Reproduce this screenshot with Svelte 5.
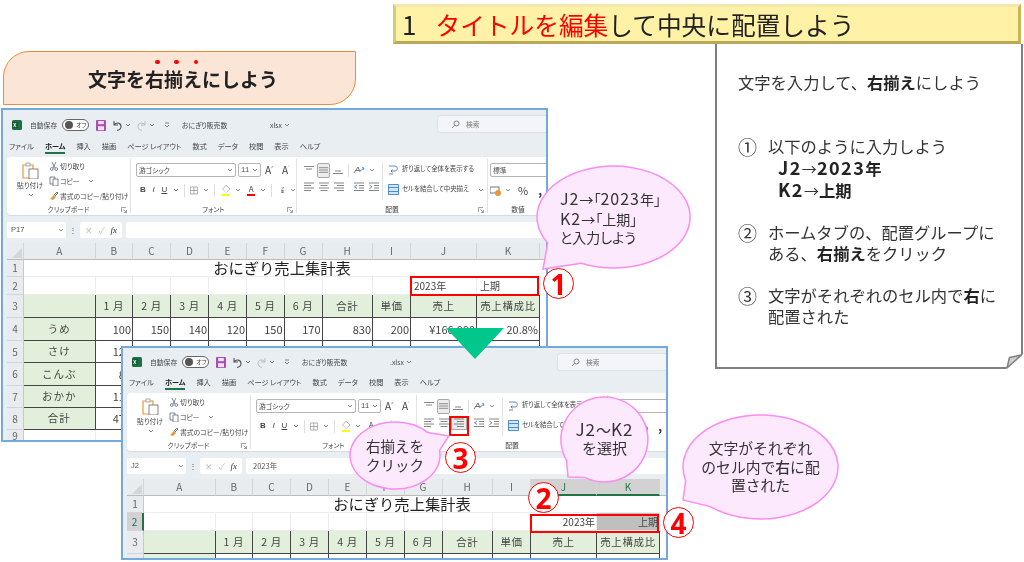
<script>
	const columns = ['A', 'B', 'C', 'D', 'E', 'F', 'G', 'H', 'I', 'J', 'K'];
	const headers = ['', '1 月', '2 月', '3 月', '4 月', '5 月', '6 月', '合計', '単価', '売上', '売上構成比'];
	// 5行目以降は2枚目のウィンドウに隠れるのでB列まで
	const body = [
		['うめ', '100', '150', '140', '120', '150', '170', '830', '200', '¥166,000', '20.8%'],
		['さけ', '120', '', '', '', '', '', '', '', '', ''],
		['こんぶ', '80', '', '', '', '', '', '', '', '', ''],
		['おかか', '110', '', '', '', '', '', '', '', '', ''],
		['合計', '470', '', '', '', '', '', '', '', '', '']
	];
	const blankRow = ['', '', '', '', '', '', '', '', '', '', ''];
	const tabs = ['ファイル', 'ホーム', '挿入', '描画', 'ページ レイアウト', '数式', 'データ', '校閲', '表示', 'ヘルプ'];

	// 吹き出しの輪郭: 楕円 + 先端 (tx, ty) へのしっぽ
	function bubble(w, h, tx, ty) {
		const rx = w / 2;
		const ry = h / 2;
		const a = Math.atan2((ty - ry) / ry, (tx - rx) / rx);
		const d = 0.3;
		const p = (t) => `${(rx + rx * Math.cos(t)).toFixed(1)} ${(ry + ry * Math.sin(t)).toFixed(1)}`;
		return `M${p(a + d)} A${rx} ${ry} 0 1 1 ${p(a - d)} L${tx} ${ty} Z`;
	}
</script>

{#snippet lines(rows)}
	<svg class="ico" width="12" height="12" viewBox="0 0 12 12" fill="none" stroke="#777" stroke-width="0.9">
		{#each rows as r}
			<path d={r} />
		{/each}
	</svg>
{/snippet}

{#snippet chev()}
	<svg class="chev" width="6" height="4" viewBox="0 0 6 4" fill="none" stroke="#666" stroke-width="0.8"><path d="M1 1l2 2 2-2" /></svg>
{/snippet}

{#snippet launcher()}
	<svg class="launcher" width="6" height="6" viewBox="0 0 6 6" fill="none" stroke="#777" stroke-width="0.7"><path d="M.5 5V.5H5M2.5 2.5L5.5 5.5M5.5 3v2.5H3" /></svg>
{/snippet}

{#snippet excel(second)}
	<div class="titlebar">
		<svg class="logo" width="10" height="10" viewBox="0 0 10 10"><rect width="10" height="10" rx="1.5" fill="#1d7044" /><rect x="0" y="2" width="6" height="6" fill="#0f5c34" /><path d="M1.5 3l2.5 4M4 3L1.5 7" stroke="#fff" stroke-width="0.9" /></svg>
		<span class="autosave">自動保存</span>
		<span class="toggle"><i></i>オフ</span>
		<svg class="save" width="10" height="11" viewBox="0 0 10 11"><rect width="10" height="11" rx="1" fill="#a84fb0" /><rect x="2.2" y="1" width="5.6" height="3.2" fill="#f3e2f5" /><rect x="2" y="6.2" width="6" height="4" fill="#f3e2f5" /></svg>
		<svg class="undo" width="11" height="11" viewBox="0 0 11 11" fill="none" stroke="#555" stroke-width="1.1"><path d="M2 1v4h4M2 5c2-3 7-2.500 7 1.500 0 2-1.500 3.500-4 4" /></svg>
		{@render chev()}
		<svg class="redo" width="11" height="11" viewBox="0 0 11 11" fill="none" stroke="#bbb" stroke-width="1"><path d="M9 1v4H5M9 5C7 2 2 2.500 2 6.500c0 2 1.500 3.500 4 4" /></svg>
		{@render chev()}
		<svg class="qat" width="6" height="6" viewBox="0 0 6 6" fill="none" stroke="#666" stroke-width="0.8"><path d="M1 1h4M1 3l2 2 2-2" /></svg>
		<span class="filename">おにぎり販売数</span>
		<span class="ext">{second ? '.xlsx' : 'xlsx'}</span>
		{@render chev()}
		<div class="search">
			<svg width="9" height="9" viewBox="0 0 9 9" fill="none" stroke="#666" stroke-width="0.8"><circle cx="5.500" cy="3.500" r="2.500" /><path d="M3.700 5.300L1 8" /></svg>
			<span>検索</span>
		</div>
	</div>

	<div class="tabs">
		{#each tabs as tab, i}
			<span class:active={i === 1}>{tab}</span>
		{/each}
	</div>

	<div class="ribbon">
		<section class="group clipboard">
			<div class="group-body">
				<div class="paste">
					<svg width="17" height="17" viewBox="0 0 17 17" fill="none"><path d="M1 3h10v13H1z" stroke="#e69a3c" stroke-width="1.200" /><rect x="4" y="1" width="4" height="3" fill="#fff" stroke="#888" stroke-width="0.700" /><rect x="7" y="7" width="9" height="10" fill="#fff" stroke="#777" stroke-width="0.900" /></svg>
					<span>貼り付け</span>
					{@render chev()}
				</div>
				<div class="clip-list">
					<div><svg width="10" height="10" viewBox="0 0 10 10" fill="none" stroke="#5a6b7c" stroke-width="0.800"><path d="M3 1l3 6M7 1L4 7" /><circle cx="2.800" cy="8" r="1.400" /><circle cx="7.200" cy="8" r="1.400" /></svg>切り取り</div>
					<div><svg width="10" height="10" viewBox="0 0 10 10" fill="none" stroke="#5a6b7c" stroke-width="0.800"><path d="M1 1h5v7H1z" /><path d="M4 3h5v7H4z" fill="#fff" /></svg>コピー<span class="copy-chev">{@render chev()}</span></div>
					<div><svg width="10" height="10" viewBox="0 0 10 10" fill="none"><path d="M1 8l4-4 2 2-3 3z" fill="#e69a3c" /><path d="M5 4l3-3 1 1-3 3" stroke="#555" stroke-width="0.800" /></svg>書式のコピー/貼り付け</div>
				</div>
			</div>
			<div class="group-label">クリップボード{@render launcher()}</div>
		</section>

		<section class="group font">
			<div class="group-body stack">
				<div class="row">
					<span class="select family">游ゴシック{@render chev()}</span>
					<span class="select size">11{@render chev()}</span>
					<span class="grow-a">A<sup>^</sup></span>
					<span class="shrink-a">A<sup>˅</sup></span>
				</div>
				<div class="row fmt">
					<b class="fb">B</b>
					<i class="fi">I</i>
					<u class="fu">U</u>
					{@render chev()}
					<em class="sep"></em>
					<svg width="11" height="11" viewBox="0 0 11 11" fill="none" stroke="#777" stroke-width="0.800"><path d="M.5.500h10v10H.5zM5.500.500v10M.5 5.500h10" /></svg>
					{@render chev()}
					<em class="sep"></em>
					<span class="colored yellow">◇</span>
					{@render chev()}
					<span class="colored red">A</span>
					{@render chev()}
					<em class="sep"></em>
					<span class="phonetic">ア<br />亜</span>
					{@render chev()}
				</div>
			</div>
			<div class="group-label">フォント{@render launcher()}</div>
		</section>

		<section class="group align">
			<div class="group-body stack">
				<div class="row">
					{@render lines(['M1 2.500h10M3 5h6'])}
					<span class="pressed">{@render lines(['M1 3.500h10M1 6h10M1 8.500h10'])}</span>
					{@render lines(['M3 7h6M1 9.500h10'])}
					<em class="sep"></em>
					<svg class="ico" width="12" height="12" viewBox="0 0 12 12" fill="none" stroke="#666" stroke-width="0.900"><path d="M1 9l4-6 2 5M2.500 6.500h3.500" /><path d="M7 7l4-3M9 3.500l2 .5-.5 2" stroke="#4a8fd0" /></svg>
					{@render chev()}
				</div>
				<div class="row">
					{@render lines(['M1 2h10M1 4.500h7M1 7h10M1 9.500h7'])}
					{@render lines(['M1 2h10M2.500 4.500h7M1 7h10M2.500 9.500h7'])}
					<span class="right-btn" class:marked={second}>{@render lines(['M1 2h10M4 4.500h7M1 7h10M4 9.500h7'])}</span>
					<em class="sep"></em>
					<svg class="ico" width="12" height="12" viewBox="0 0 12 12" fill="none" stroke="#777" stroke-width="0.900"><path d="M1 2h10M6 4.500h5M6 7h5M1 9.500h10" /><path d="M4 4L1.500 5.800 4 7.500" stroke="#3f83c4" /></svg>
					<svg class="ico" width="12" height="12" viewBox="0 0 12 12" fill="none" stroke="#777" stroke-width="0.900"><path d="M1 2h10M6 4.500h5M6 7h5M1 9.500h10" /><path d="M1.500 4L4 5.800 1.500 7.500" stroke="#3f83c4" /></svg>
				</div>
			</div>
			<em class="vsep"></em>
			<div class="wrap-col">
				<div><svg class="ico" width="11" height="12" viewBox="0 0 11 12" fill="none" stroke="#4a7fb5" stroke-width="0.900"><path d="M1 2h6c3 0 3 5 0 5H3M4.500 5.500L3 7l1.500 1.500" /><path d="M1 10h4" stroke="#777" /></svg>折り返して全体を表示する</div>
				<div><svg class="ico" width="11" height="11" viewBox="0 0 11 11" fill="#d3e6f6" stroke="#3f83c4" stroke-width="0.900"><path d="M.5.500h10v10H.5zM.5 3.500h10M.5 7.500h10" /></svg>セルを結合して中央揃え<span class="merge-chev">{@render chev()}</span></div>
			</div>
			<div class="group-label">配置{@render launcher()}</div>
		</section>

		<section class="group number">
			<div class="group-body stack">
				<div class="row"><span class="select numfmt">標準</span></div>
				<div class="row">
					<svg width="11" height="11" viewBox="0 0 11 11"><rect y="2" width="9" height="6" fill="none" stroke="#777" /><circle cx="8" cy="8" r="3" fill="#e9963a" /></svg>
					{@render chev()}
					<span class="pct">%</span>
					<b class="comma">,</b>
				</div>
			</div>
			<div class="group-label">数値</div>
		</section>
	</div>

	<div class="formula">
		<span class="namebox">{second ? 'J2' : 'P17'}{@render chev()}</span>
		<span class="dots">⋮</span>
		<span class="fx-box"><s>✕</s><s>✓</s><i>fx</i></span>
		<span class="input">{second ? '2023年' : ''}</span>
	</div>

	<div class="sheet">
		<div class="corner"></div>
		{#each columns as col, i}
			<div class="col-head" class:sel={second && i >= 9}>{col}</div>
		{/each}
		<div class="filler"></div>

		<div class="row-head">1</div>
		<div class="title-cell">おにぎり売上集計表</div>
		<div class="filler blank"></div>

		<div class="row-head" class:sel={second}>2</div>
		{#each columns as col, i}
			<div
				class="cell plain"
				class:num={second}
				class:k-sel={second && i === 10}
				class:left={!second}
			>
				{#if i === 9}2023年{:else if i === 10}上期{/if}
			</div>
		{/each}
		<div class="filler blank"></div>

		<div class="row-head">3</div>
		{#each headers as h}
			<div class="cell th">{h}</div>
		{/each}
		<div class="filler blank"></div>

		{#each second ? [blankRow] : body as row, r}
			<div class="row-head">{second ? '' : r + 4}</div>
			{#each row as value, i}
				<div class="cell" class:label={i === 0} class:num={i > 0}>{value}</div>
			{/each}
			<div class="filler blank"></div>
		{/each}

		{#if !second}
			<div class="row-head">9</div>
			{#each columns as col}
				<div class="cell plain"></div>
			{/each}
			<div class="filler blank"></div>
		{/if}
	</div>
{/snippet}

{#snippet callout(name, w, h, tx, ty, text)}
	<div class="callout {name}">
		<svg width={w} height={h} viewBox="0 0 {w} {h}">
			<path d={bubble(w, h, tx, ty)} fill="#fde9fe" stroke="#fa8cf3" stroke-width="1.500" />
		</svg>
		<p><span>{@render text()}</span></p>
	</div>
{/snippet}

{#snippet t1()}<span class="lat">J2</span>→「<span class="lat">2023</span>年」<br /><span class="lat">K2</span>→「上期」<br />と入力しよう{/snippet}
{#snippet t2()}<span class="lat">J2</span>～<span class="lat">K2</span><br />を選択{/snippet}
{#snippet t3()}右揃えを<br />クリック{/snippet}
{#snippet t4()}文字がそれぞれ<br />のセル内で<b>右</b>に配<br />置された{/snippet}

<main class="slide">
	<header class="headline">
		<span class="no">1</span>
		<span><span class="hl">タイトルを編集</span>して中央に配置しよう</span>
	</header>

	<div class="subtitle">
		<span>文字を<span class="dot">右</span><span class="dot">揃</span><span class="dot">え</span>にしよう</span>
	</div>

	<div class="window first">{@render excel(false)}</div>
	<div class="redbox box-a"></div>

	<aside class="note">
		<p class="lead">文字を入力して、<b>右揃え</b>にしよう</p>
		<ol>
			<li>
				<span class="mark">①</span>
				<div>以下のように入力しよう<br /><b class="ind lat">J2</b><span class="arrow">→</span><b class="lat">2023</b><b>年</b><br /><b class="ind lat">K2</b><span class="arrow">→</span><b>上期</b></div>
			</li>
			<li>
				<span class="mark">②</span>
				<div>ホームタブの、配置グループに<br />ある、<b>右揃え</b>をクリック</div>
			</li>
			<li>
				<span class="mark">③</span>
				<div>文字がそれぞれのセル内で<b>右</b>に<br />配置された</div>
			</li>
		</ol>
		<svg class="fold" width="17" height="15" viewBox="0 0 17 15">
			<path d="M0 15L17 0V15z" fill="#fff" />
			<path d="M1 14L3.500 3.500 15.500 1z" fill="#cfcfcf" stroke="#7f7f7f" stroke-width="1.500" stroke-linejoin="round" />
		</svg>
	</aside>

	{@render callout('c1', 153, 102, 6, 103, t1)}
	<div class="num-badge n1">1</div>

	<div class="window second">{@render excel(true)}</div>
	<div class="redbox box-b"></div>
	<div class="redbox box-c"></div>

	<svg class="arrow-down" width="58" height="31" viewBox="0 0 58 31"><path d="M0 0H58L29 31z" fill="#00c78c" /></svg>

	{@render callout('c2', 87, 85, 7, 80, t2)}
	{@render callout('c3', 90, 67, 99, 14, t3)}
	{@render callout('c4', 155, 104, 0, 85, t4)}

	<div class="num-badge n2">2</div>
	<div class="num-badge n3">3</div>
	<div class="num-badge n4">4</div>
</main>

<style>
	:global(body) {
		margin: 0;
		background: #fff;
	}

	.slide {
		position: relative;
		width: 1024px;
		height: 562px;
		overflow: hidden;
		background: #fff;
		color: #222;
		font-family: 'Noto Sans CJK JP', 'Noto Sans', sans-serif;
		filter: blur(0.3px);
	}

	/* 上の見出し */
	.headline {
		position: absolute;
		left: 393px;
		top: 4px;
		width: 628px;
		height: 40px;
		box-sizing: border-box;
		display: flex;
		align-items: center;
		gap: 19px;
		padding-left: 6px;
		font-size: 24.700px;
		line-height: 1;
		color: #222;
		background: #fff2a6;
		border-style: solid;
		border-width: 3px;
		border-color: #f3e7ad #c9b659 #b9a85a #d9c877;
		z-index: 3;
	}

	.headline .no {
		font-size: 26px;
	}

	.hl {
		color: #f00;
	}

	.subtitle {
		position: absolute;
		left: 3px;
		top: 51px;
		width: 353px;
		height: 54px;
		box-sizing: border-box;
		display: flex;
		align-items: center;
		justify-content: center;
		padding-left: 7px;
		font-size: 19px;
		font-weight: 700;
		background: #fbe5d6;
		border: 1.5px solid #ed8b3c;
		border-radius: 26px 0 26px 0;
	}

	/* 傍点 */
	.dot {
		position: relative;
	}

	.dot::before {
		content: '';
		position: absolute;
		left: 50%;
		top: -5px;
		width: 4.500px;
		height: 4.500px;
		margin-left: 1px;
		border-radius: 50%;
		background: #f00;
	}

	/* 英数字は少し大きめ (元の書体に幅を合わせる) */
	.lat {
		font-size: 16px;
		letter-spacing: 1px;
	}

	/* 右の説明 */
	.note {
		position: absolute;
		left: 715px;
		top: 44px;
		width: 308px;
		height: 325px;
		box-sizing: border-box;
		padding: 28px 0 0 21px;
		border: 2px solid #7f7f7f;
		border-top: 0;
		font-size: 16.300px;
		line-height: 21px;
		color: #333;
	}

	.note b {
		font-weight: 700;
		color: #222;
	}

	.note .lat {
		font-size: 18px;
		letter-spacing: 1.500px;
	}

	.note p {
		margin: 0;
	}

	.note ol {
		list-style: none;
		margin: 43px 0 0;
		padding: 0;
		display: flex;
		flex-direction: column;
		gap: 21px;
	}

	.note li {
		display: flex;
		gap: 11px;
	}

	.mark {
		width: 19px;
		flex: none;
		font-size: 19px;
	}

	.ind {
		margin-left: 10px;
	}

	.arrow {
		font-size: 15px;
	}

	.fold {
		position: absolute;
		right: -2px;
		bottom: -2px;
	}

	/* Excel ウィンドウ */
	.window {
		position: absolute;
		width: 547px;
		box-sizing: border-box;
		border: 2px solid #73a9dc;
		background: #e9eef3;
		overflow: hidden;
		color: #444;
		font-size: 6.800px;
		line-height: 1;
		filter: blur(0.25px);
	}

	.first {
		left: 1px;
		top: 108px;
		height: 334px;
	}

	.second {
		left: 121px;
		top: 346px;
		height: 214px;
	}

	.titlebar,
	.tabs,
	.ribbon {
		font-feature-settings: 'palt';
	}

	.titlebar {
		height: 30px;
		display: flex;
		align-items: center;
		padding-left: 9px;
		box-sizing: border-box;
	}

	.second .titlebar {
		height: 28px;
	}

	.autosave {
		margin-left: 8px;
		width: 28px;
	}

	.toggle {
		display: flex;
		align-items: center;
		gap: 3px;
		margin-left: 4px;
		width: 27px;
		height: 12px;
		box-sizing: border-box;
		padding-left: 2px;
		border: 1px solid #666;
		border-radius: 7px;
		background: #fff;
		font-size: 6px;
	}

	.toggle i {
		width: 8px;
		height: 8px;
		border-radius: 50%;
		background: #555;
	}

	.save {
		margin-left: 7px;
	}

	.undo {
		margin-left: 6px;
	}

	.chev {
		flex: none;
		margin-left: 2px;
	}

	.redo {
		margin-left: 5px;
	}

	.qat {
		margin-left: 9px;
	}

	.filename {
		margin-left: 12px;
		width: 88px;
	}

	.search {
		position: absolute;
		left: 434px;
		top: 5px;
		width: 120px;
		height: 18px;
		box-sizing: border-box;
		display: flex;
		align-items: center;
		gap: 6px;
		padding-left: 13px;
		background: #f3f5f8;
		border: 1px solid #dfe3e8;
		border-radius: 3px;
		color: #777;
	}

	.tabs {
		height: 17px;
		display: flex;
		align-items: center;
		gap: 11px;
		padding: 0 0 3px 6px;
		box-sizing: border-box;
		font-size: 7.200px;
	}

	.tabs span {
		position: relative;
		white-space: nowrap;
	}

	.tabs .active {
		font-weight: 700;
		color: #222;
	}

	.tabs .active::after {
		content: '';
		position: absolute;
		left: 0;
		right: 0;
		bottom: -3px;
		height: 1.500px;
		background: #217346;
	}

	.ribbon {
		display: flex;
		height: 58px;
		margin-left: 4px;
		background: #fff;
		border-radius: 4px 0 0 4px;
		box-shadow: 0 1px 1px #d5dae0;
	}

	.group {
		position: relative;
		flex: none;
		box-sizing: border-box;
		border-right: 1px solid #e3e3e3;
		margin: 2px 0;
	}

	.clipboard {
		width: 124px;
	}

	.font {
		width: 166px;
	}

	.align {
		width: 191px;
	}

	.number {
		width: 60px;
		border-right: 0;
	}

	.group-body {
		display: flex;
	}

	.group-label {
		position: absolute;
		left: 0;
		right: 0;
		top: 47px;
		text-align: center;
	}

	.launcher {
		position: absolute;
		right: 3px;
		top: 1px;
	}

	.paste {
		width: 34px;
		padding: 3px 0 0 6px;
		display: flex;
		flex-direction: column;
		align-items: center;
		gap: 4px;
		white-space: nowrap;
	}

	.paste span {
		margin-top: -1px;
	}

	.clip-list {
		display: flex;
		flex-direction: column;
		gap: 5px;
		padding: 2px 0 0 0;
		margin-left: 2px;
	}

	.clip-list div {
		display: flex;
		align-items: center;
		gap: 1px;
		height: 10px;
		white-space: nowrap;
	}

	.copy-chev {
		margin-left: 6px;
		display: flex;
	}

	.stack {
		flex-direction: column;
		padding: 4px 0 0 5px;
		gap: 6px;
	}

	.row {
		display: flex;
		align-items: center;
		height: 14px;
		gap: 2px;
	}

	.select {
		position: relative;
		height: 14px;
		box-sizing: border-box;
		display: flex;
		align-items: center;
		padding-left: 2px;
		border: 1px solid #b5b5b5;
		border-radius: 2px;
	}

	.select .chev {
		position: absolute;
		right: 2px;
	}

	.family {
		width: 100px;
	}

	.size {
		width: 23px;
		font-family: 'Liberation Mono', monospace;
	}

	.grow-a,
	.shrink-a {
		margin-left: 2px;
		width: 13px;
		font-size: 10px;
	}

	sup {
		font-size: 5px;
		vertical-align: top;
		color: #4a8fd0;
	}

	.fmt {
		gap: 3px;
		padding-left: 3px;
	}

	.fb,
	.fi,
	.fu {
		width: 11px;
		font-size: 8px;
		text-align: center;
		font-family: 'Liberation Sans', sans-serif;
	}

	.sep {
		display: block;
		width: 1px;
		height: 13px;
		margin: 0 2px;
		background: #ddd;
	}

	.colored {
		width: 11px;
		margin-left: 3px;
		font-size: 8px;
		font-style: normal;
		text-align: center;
		padding-bottom: 1px;
		border-bottom: 2px solid;
	}

	.yellow {
		border-color: #ff0;
		color: #666;
	}

	.red {
		border-color: #f00;
	}

	.phonetic {
		font-size: 3.500px;
		margin-left: 4px;
		width: 6px;
	}

	.align .group-body {
		gap: 3px;
		padding-left: 5px;
		width: 78px;
		box-sizing: border-box;
	}

	.align .row {
		gap: 1px;
	}

	.ico {
		flex: none;
		margin: 0 1px;
	}

	.pressed {
		display: flex;
		align-items: center;
		justify-content: center;
		width: 15px;
		height: 15px;
		background: #ececec;
		border: 1px solid #aaa;
		border-radius: 2px;
		box-sizing: border-box;
	}

	.pressed .ico {
		margin: 0;
		width: 11px;
	}

	.right-btn {
		display: flex;
	}

	.marked {
		background: #ececec;
		outline: 1px solid #aaa;
	}

	.vsep {
		position: absolute;
		left: 85px;
		top: 3px;
		height: 38px;
		width: 1px;
		background: #e3e3e3;
	}

	.wrap-col {
		position: absolute;
		left: 90px;
		top: 5px;
		display: flex;
		flex-direction: column;
		gap: 9px;
		white-space: nowrap;
		font-size: 6.400px;
	}

	.wrap-col div {
		display: flex;
		align-items: center;
		gap: 2px;
		height: 11px;
	}

	.merge-chev {
		margin-left: 5px;
		display: flex;
	}

	.numfmt {
		width: 70px;
		color: #555;
	}

	.number .stack {
		padding-left: 2px;
	}

	.pct {
		margin-left: 5px;
		font-size: 11px;
	}

	.comma {
		margin-left: 8px;
		font-size: 12px;
		color: #333;
		line-height: 0.6;
	}

	.formula {
		display: flex;
		align-items: stretch;
		height: 16px;
		margin: 7px 0 5px 4px;
		color: #555;
	}

	.formula > span {
		background: #fff;
		border-radius: 2px;
		display: flex;
		align-items: center;
	}

	.namebox {
		position: relative;
		width: 59px;
		padding-left: 4px;
		box-sizing: border-box;
		font-family: 'Liberation Sans', sans-serif;
		font-size: 7.500px;
	}

	.namebox .chev {
		position: absolute;
		right: 2px;
	}

	.formula .dots {
		width: 14px;
		background: none;
		justify-content: center;
		font-size: 8px;
	}

	.fx-box {
		width: 42px;
		justify-content: space-around;
		padding: 0 2px;
		box-sizing: border-box;
	}

	.fx-box s {
		text-decoration: none;
		color: #c4c4c4;
		font-size: 9px;
	}

	.fx-box i {
		font-family: 'Liberation Serif', serif;
		font-size: 9px;
		color: #333;
	}

	.input {
		flex: 1;
		margin-left: 4px;
		padding-left: 7px;
		font-size: 7.500px;
	}

	.sheet {
		display: grid;
		grid-template-columns: 17px 71.500px 37.500px 38px 38px 38px 37.500px 38px 50.500px 38px 66px 63px 8px;
		grid-template-rows: 17px 17px 18px 23px 23px 22px 23px 22px 22px 12px;
		margin-left: 4px;
		background: #fff;
		font-size: 11px;
		color: #444;
	}

	.corner {
		background: #e9ecef;
		border-right: 1px solid #d5d5d5;
		border-bottom: 1px solid #bbb;
		position: relative;
	}

	.corner::after {
		content: '';
		position: absolute;
		right: 1px;
		bottom: 1px;
		border-style: solid;
		border-width: 0 0 10px 10px;
		border-color: transparent transparent #d6d6d6;
	}

	.col-head {
		display: flex;
		align-items: center;
		justify-content: center;
		background: #e9ecef;
		border-right: 1px solid #d5d5d5;
		border-bottom: 1px solid #bbb;
		font-size: 10px;
		color: #666;
	}

	.col-head.sel {
		background: #d2d2d2;
		color: #1f7a4d;
		border-bottom: 2px solid #217346;
	}

	.row-head {
		display: flex;
		align-items: center;
		justify-content: center;
		background: #e9ecef;
		border-right: 1px solid #c8c8c8;
		border-bottom: 1px solid #d5d5d5;
		font-size: 10px;
		color: #666;
	}

	.row-head.sel {
		background: #d2d2d2;
		color: #1f7a4d;
		border-right: 2px solid #217346;
	}

	.filler {
		background: #e9ecef;
		border-bottom: 1px solid #bbb;
	}

	.filler.blank {
		background: #fff;
		border-bottom: 0;
	}

	.title-cell {
		grid-column: span 11;
		display: flex;
		align-items: center;
		justify-content: center;
		font-size: 15.300px;
		color: #222;
		border-bottom: 1px solid #eee;
	}

	.cell {
		display: flex;
		align-items: center;
		justify-content: center;
		box-sizing: border-box;
		border-right: 1px solid #444;
		border-bottom: 1px solid #444;
		white-space: nowrap;
		overflow: hidden;
		padding: 0 1px;
	}

	.plain {
		border-color: #ececec;
		font-size: 10px;
	}

	.th {
		background: #e2efda;
		letter-spacing: 0.600px;
		font-size: 10.500px;
	}

	.label {
		background: #e2efda;
		letter-spacing: 1px;
		font-size: 10.500px;
	}

	.num {
		justify-content: flex-end;
	}

	.left {
		justify-content: flex-start;
		padding-left: 3px;
	}

	.k-sel {
		background: #bfbfbf;
	}

	/* 赤枠 */
	.redbox {
		position: absolute;
		box-sizing: border-box;
		border: 2px solid #f00;
		z-index: 2;
	}

	.box-a {
		left: 410px;
		top: 276px;
		width: 129px;
		height: 20px;
		z-index: 0;
	}

	.box-b {
		left: 449px;
		top: 416px;
		width: 20px;
		height: 20px;
	}

	.box-c {
		left: 530px;
		top: 514px;
		width: 129px;
		height: 19px;
	}

	.arrow-down {
		position: absolute;
		left: 446px;
		top: 328px;
		z-index: 2;
	}

	/* 吹き出し */
	.callout {
		position: absolute;
		z-index: 3;
	}

	.callout svg {
		position: absolute;
		inset: 0;
		overflow: visible;
	}

	.callout p {
		position: relative;
		box-sizing: border-box;
		margin: 0;
		height: 100%;
		display: flex;
		align-items: center;
		justify-content: center;
		text-align: center;
		line-height: 18.500px;
		font-size: 14.500px;
		color: #333;
		white-space: nowrap;
	}

	.c1 {
		left: 537px;
		top: 166px;
		width: 153px;
		height: 102px;
	}

	.c1 p {
		display: block;
		height: auto;
		padding: 23px 0 0 23px;
		text-align: left;
		font-size: 14px;
		font-feature-settings: 'palt';
	}

	.c2 {
		left: 561px;
		top: 397px;
		width: 87px;
		height: 85px;
	}

	.c2 p {
		font-size: 15px;
		padding-bottom: 2px;
	}

	.c2 .lat {
		font-size: 17px;
	}

	.c3 {
		left: 350px;
		top: 422px;
		width: 90px;
		height: 67px;
	}

	.c4 {
		left: 683px;
		top: 415px;
		width: 155px;
		height: 104px;
	}

	.c4 p {
		font-size: 14.800px;
	}

	.c4 b {
		font-weight: 500;
	}

	/* 丸数字 */
	.num-badge {
		position: absolute;
		z-index: 4;
		width: 31px;
		height: 31px;
		box-sizing: border-box;
		display: flex;
		align-items: center;
		justify-content: center;
		border: 1.500px solid #f00;
		border-radius: 50%;
		background: #fff;
		color: #f00;
		font-family: 'Noto Sans', sans-serif;
		font-size: 28px;
		font-weight: 700;
		line-height: 1;
	}

	.n1 {
		left: 543px;
		top: 268px;
	}

	.n2 {
		left: 528px;
		top: 482px;
	}

	.n3 {
		left: 445px;
		top: 442px;
	}

	.n4 {
		left: 663px;
		top: 507px;
	}
</style>
